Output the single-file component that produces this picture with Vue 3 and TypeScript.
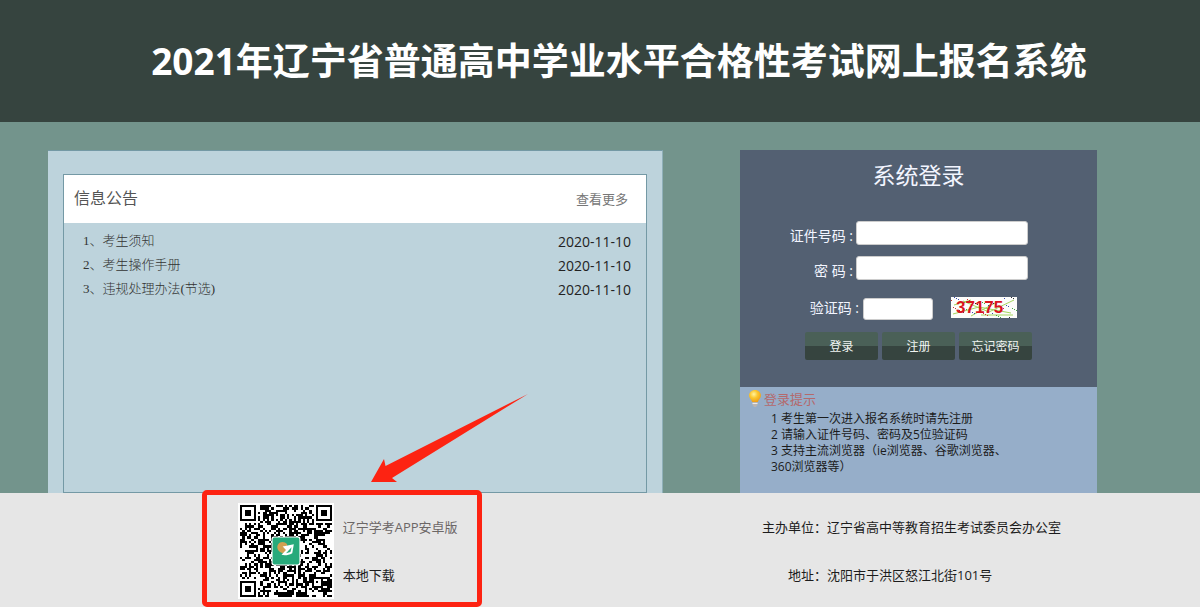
<script setup lang="ts">
import { ref } from 'vue'

interface Notice {
  id: number
  title: string
  date: string
}

const notices: Notice[] = [
  { id: 1, title: '考生须知', date: '2020-11-10' },
  { id: 2, title: '考生操作手册', date: '2020-11-10' },
  { id: 3, title: '违规处理办法(节选)', date: '2020-11-10' },
]

const tips: string[] = [
  '1 考生第一次进入报名系统时请先注册',
  '2 请输入证件号码、密码及5位验证码',
  '3 支持主流浏览器（ie浏览器、谷歌浏览器、360浏览器等）',
]

const idNumber = ref('')
const password = ref('')
const captcha = ref('')

const SIZE = 41

function finder(x: number, y: number): boolean | null {
  const corners = [[0, 0], [SIZE - 7, 0], [0, SIZE - 7]]
  for (const [cx, cy] of corners) {
    const d = Math.max(Math.abs(x - cx - 3), Math.abs(y - cy - 3))
    if (d <= 4) return d !== 4 && d !== 2
  }
  const a = Math.max(Math.abs(x - 34), Math.abs(y - 34))
  if (a <= 2) return a !== 1
  if (x === 6 || y === 6) return (x + y) % 2 === 0
  return null
}

function buildCode(): string {
  let seed = 20211
  let path = ''
  for (let y = 0; y < SIZE; y++) {
    for (let x = 0; x < SIZE; x++) {
      seed = (seed * 1103515245 + 12345) % 2147483648
      const fixed = finder(x, y)
      const dark = fixed === null ? (seed / 2147483648) < 0.52 : fixed
      if (dark) path += `M${x + 1} ${y + 1}h1v1h-1z`
    }
  }
  return path
}

const codePath = buildCode()

const colors = ['#3b4fb0', '#c33', '#4a4', '#333']
const specks = Array.from({ length: 44 }, (_, i) => ({
  x: (i * 29 + 3) % 66,
  y: (i * 13 + (i % 5) * 3) % 21,
  fill: colors[i % 4],
}))
</script>

<template>
  <div class="page">
    <header class="banner">
      <h1>2021年辽宁省普通高中学业水平合格性考试网上报名系统</h1>
    </header>

    <main class="content">
      <section class="news">
        <div class="news-box">
          <div class="news-head">
            <h2>信息公告</h2>
            <a href="#more">查看更多</a>
          </div>
          <ul class="news-list">
            <li v-for="n in notices" :key="n.id">
              <a :href="'#notice-' + n.id">{{ n.id }}、{{ n.title }}</a>
              <time>{{ n.date }}</time>
            </li>
          </ul>
        </div>
      </section>

      <section class="side">
        <form class="login" @submit.prevent>
          <h2>系统登录</h2>
          <div class="row">
            <label for="id-number">证件号码 :</label>
            <input id="id-number" v-model="idNumber" type="text" />
          </div>
          <div class="row">
            <label for="password">密 码 :</label>
            <input id="password" v-model="password" type="password" />
          </div>
          <div class="row code-row">
            <label for="captcha">验证码 :</label>
            <input id="captcha" v-model="captcha" type="text" />
            <svg class="captcha" width="66" height="21" viewBox="0 0 66 21">
              <rect width="66" height="21" fill="#fdfdfb" />
              <path d="M2 17L28 10L60 16M12 4L38 15L63 3M20 19L46 5M3 8L20 3M30 18H62" fill="none" stroke="#a4d65e" />
              <rect v-for="(s, i) in specks" :key="i" :x="s.x" :y="s.y" width="1" height="1" :fill="s.fill" />
              <text x="5" y="16" font-family="Liberation Sans, sans-serif" font-size="17" font-weight="700" fill="#d9141e">37175</text>
            </svg>
          </div>
          <div class="buttons">
            <button type="submit">登录</button>
            <button type="button">注册</button>
            <button type="button">忘记密码</button>
          </div>
        </form>
        <div class="tips">
          <h3>
            <svg width="14" height="19" viewBox="0 0 14 19">
              <defs>
                <radialGradient id="glow" cx="0.4" cy="0.35" r="0.65">
                  <stop offset="0" stop-color="#fff3a0" />
                  <stop offset="0.5" stop-color="#fbc62e" />
                  <stop offset="1" stop-color="#eda01c" />
                </radialGradient>
              </defs>
              <path d="M7 1C3.6 1 1 3.500 1 6.500C1 9 3.400 10.500 4.200 13H9.800C10.600 10.500 13 9 13 6.500C13 3.500 10.400 1 7 1Z" fill="url(#glow)" />
              <path d="M4.500 13H9.500V16L8 18H6L4.500 16Z" fill="#b9b5b4" />
              <path d="M4.500 14.500H9.500" stroke="#eceae8" />
            </svg>
            登录提示
          </h3>
          <ul>
            <li v-for="t in tips" :key="t">{{ t }}</li>
          </ul>
        </div>
      </section>
    </main>

    <footer class="foot">
      <div class="download">
        <svg class="arrow" width="158" height="90" viewBox="0 0 158 90">
          <path d="M0 88L13 65L14.500 72L157 0L21 84L26 88Z" fill="#fd2312" />
        </svg>
        <svg class="qr" width="96" height="96" viewBox="0 0 43 43" role="img" aria-label="辽宁学考APP安卓版">
          <rect width="43" height="43" fill="#fff" />
          <path :d="codePath" fill="#000" shape-rendering="crispEdges" />
          <rect x="15" y="15" width="13" height="13" rx="1" fill="#fff" />
          <rect x="15.500" y="15.500" width="12" height="12" rx="0.800" fill="#27aa7b" />
          <path d="M18 18.500C19 17 21 17.300 22 18.500L22 21.500L20 22.500C18 22 17 20 18 18.500Z" fill="#d2a052" />
          <path d="M20 19.500L25 18.500L24.300 22.500C22.500 23.500 20.800 23.600 19.500 23.200L21.500 21Z" fill="#fff" />
          <path d="M21.500 22.500L24 19.800L23.500 22Z" fill="#27aa7b" />
        </svg>
        <div class="app-text">
          <span>辽宁学考APP安卓版</span>
          <a href="#download">本地下载</a>
        </div>
      </div>
      <dl class="info">
        <dt>主办单位：</dt>
        <dd>辽宁省高中等教育招生考试委员会办公室</dd>
        <dt>地址：</dt>
        <dd>沈阳市于洪区怒江北街101号</dd>
      </dl>
    </footer>
  </div>
</template>

<style>
body {
  margin: 0;
  background: #e6e6e6;
}
</style>

<style scoped>
.page {
  font-family: "Open Sans", "Noto Sans CJK SC", sans-serif;
  font-size: 13px;
  color: #1c1c1c;
  min-height: 100vh;
  background: #e6e6e6;
}

h1,
h2,
h3,
ul,
dl,
dd {
  margin: 0;
  padding: 0;
  font-weight: 400;
  list-style: none;
}

a {
  color: inherit;
  text-decoration: none;
}

input,
button {
  box-sizing: border-box;
  font-family: inherit;
}

svg {
  display: block;
}

.banner {
  padding: 31px 0;
  background: #36443f;
  color: #fff;
}

.banner h1 {
  padding-left: 38px;
  font-size: 37px;
  font-weight: 700;
  line-height: 60px;
  text-align: center;
}

.content,
.foot {
  display: grid;
  grid-template-columns: 615fr 357fr;
  column-gap: 77px;
  padding: 0 103px 0 48px;
}

.content {
  padding-top: 28px;
  background: #73948c;
}

.news {
  display: flex;
  box-sizing: border-box;
  padding: 23px 15px 0;
  background: #bdd3dc;
  border-top: 1px solid #7499a5;
  border-right: 1px solid #8fb0b9;
}

.news-box {
  flex: 1;
  border: 1px solid #7499a5;
}

.news-head {
  display: flex;
  justify-content: space-between;
  padding: 0 18px 0 10px;
  background: #fff;
  line-height: 48px;
  color: #777;
}

.news-head h2 {
  font-size: 16px;
  line-height: 46px;
  color: #555;
}

.news-list {
  padding: 6px 15px 0 19px;
}

.news-list li {
  display: flex;
  justify-content: space-between;
  line-height: 24px;
}

.news-list a {
  font-family: "Liberation Serif", "Noto Sans CJK SC", serif;
  font-weight: 300;
  color: #333;
}

.news-list time {
  font-size: 14px;
  line-height: 26px;
  height: 24px;
  color: #222;
}

.login {
  padding: 6px 0 27px;
  background: #536072;
  color: #f2f5ff;
}

.login h2 {
  margin-bottom: 27px;
  font-size: 23px;
  line-height: 38px;
  text-align: center;
}

.row {
  display: flex;
  margin-bottom: 11px;
  font-size: 14px;
}

.row label {
  width: 113px;
  margin-right: 3px;
  line-height: 30px;
  height: 24px;
  text-align: right;
}

.row input {
  width: 172px;
  height: 24px;
  padding: 0 6px;
  border: 1px solid #ccc;
  border-radius: 3px;
  background: #fff;
}

.code-row {
  padding-top: 6px;
}

.code-row label {
  width: 119px;
  margin-right: 4px;
  line-height: 22px;
}

.code-row input {
  width: 70px;
  height: 22px;
  margin-top: 1px;
}

.captcha {
  margin-left: 18px;
}

.buttons {
  display: flex;
  justify-content: center;
  gap: 4px;
}

.buttons button {
  width: 73px;
  height: 28px;
  padding: 0;
  border: 0;
  border-radius: 2px;
  background: linear-gradient(#4a6057 0 50%, #36443f 50% 100%);
  color: #f0f4f2;
  font-size: 12px;
}

.tips {
  padding: 2px 8px 18px;
  background: #96aec9;
}

.tips h3 {
  display: flex;
  gap: 2px;
  font-size: 13px;
  line-height: 20px;
  color: #b4696c;
}

.tips ul {
  width: 245px;
  padding: 2px 0 0 23px;
  font-size: 12px;
  line-height: 16px;
}

.foot {
  padding-bottom: 0;
}

.download {
  position: relative;
  display: flex;
  gap: 9px;
  box-sizing: border-box;
  width: 280px;
  margin: -3px 0 0 25%;
  padding: 8px 0 3px 31px;
  border: 5px solid #fd2312;
  border-radius: 5px;
  background: #e6e6e6;
  line-height: 48px;
}

.arrow {
  position: absolute;
  left: 164px;
  bottom: 100%;
  margin-bottom: 11px;
}

.app-text {
  display: flex;
  flex-direction: column;
}

.app-text span {
  color: #6c6766;
}

.info {
  display: grid;
  grid-template-columns: 87px 1fr;
  align-content: start;
  padding-top: 10px;
  line-height: 48px;
}

.info dt {
  text-align: right;
}
</style>
